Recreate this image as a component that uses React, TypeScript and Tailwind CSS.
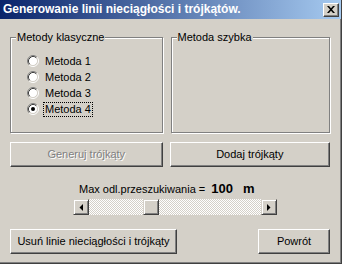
import React from "react";

const raised =
  "border border-t-white border-l-white border-r-[#404040] border-b-[#404040] shadow-[inset_-1px_-1px_0_#808080]";
const raisedSb =
  "border border-t-[#d4d0c8] border-l-[#d4d0c8] border-r-[#404040] border-b-[#404040] shadow-[inset_1px_1px_0_#fff,inset_-1px_-1px_0_#808080]";

function Radio({ checked }: { checked?: boolean }) {
  return (
    <svg width="12" height="12" viewBox="0 0 12 12" className="shrink-0">
      <circle cx="6" cy="6" r="4.5" fill="#fff" />
      <path d="M2.11 9.89 A5.5 5.5 0 0 1 9.89 2.11" fill="none" stroke="#808080" strokeWidth="1" />
      <path d="M9.89 2.11 A5.5 5.5 0 0 1 2.11 9.89" fill="none" stroke="#fff" strokeWidth="1" />
      <path d="M2.82 9.18 A4.5 4.5 0 0 1 9.18 2.82" fill="none" stroke="#404040" strokeWidth="1" />
      <path d="M9.18 2.82 A4.5 4.5 0 0 1 2.82 9.18" fill="none" stroke="#d4d0c8" strokeWidth="1" />
      {checked && <circle cx="6" cy="6" r="2" fill="#000" />}
    </svg>
  );
}

function Group({ label, className, children }: { label: string; className: string; children?: React.ReactNode }) {
  return (
    <div className={"relative border border-[#808080] shadow-[inset_1px_1px_0_#fff,1px_1px_0_#fff] " + className}>
      <span className="absolute left-[5px] top-[-7px] bg-[#d4d0c8] px-[1px] text-[11px] leading-[13px] text-black">
        {label}
      </span>
      {children}
    </div>
  );
}

export default function App() {
  const radios = ["Metoda 1", "Metoda 2", "Metoda 3", "Metoda 4"];
  return (
    <div className="w-[342px] h-[264px] overflow-hidden bg-[#d4d0c8] flex flex-col border-r border-b border-r-[#404040] border-b-[#404040] shadow-[inset_-1px_-1px_0_#808080] font-['Liberation_Sans',Arial,sans-serif] text-[11px] text-black select-none">
      {/* title bar */}
      <div className="h-[19px] flex items-center justify-between bg-[linear-gradient(to_right,#0a246a,#a6caf0)]">
        <span className="pl-[3px] text-white font-bold text-[12px] leading-[19px] whitespace-nowrap">
          Generowanie linii nieciągłości i trójkątów.
        </span>
        <div className={"w-[16px] h-[14px] mr-[2px] bg-[#d4d0c8] flex items-center justify-center " + raised}>
          <svg width="8" height="7" viewBox="0 0 8 7">
            <path d="M0 0 L2 0 L4 2.3 L6 0 L8 0 L5 3.5 L8 7 L6 7 L4 4.7 L2 7 L0 7 L3 3.5 Z" fill="#000" />
          </svg>
        </div>
      </div>

      <div className="pl-[10px] pr-[11px] flex flex-col">
        {/* groups */}
        <div className="mt-[18px] flex gap-[8px]">
          <Group label="Metody klasyczne" className="w-[153px] h-[96px]">
            <div className="flex flex-col pl-[16px] pt-[17px] gap-[4px]">
              {radios.map((r, i) => (
                <div key={r} className="flex items-center h-[12px] gap-[5px]">
                  <Radio checked={i === 3} />
                  <span
                    className={
                      "leading-[13px] px-[1px] " +
                      (i === 3 ? "outline outline-1 outline-dotted outline-black" : "")
                    }
                  >
                    {r}
                  </span>
                </div>
              ))}
            </div>
          </Group>
          <Group label="Metoda szybka" className="w-[160px] h-[96px]" />
        </div>

        {/* buttons row */}
        <div className="mt-[9px] flex gap-[7px]">
          <div className={"w-[153px] h-[25px] flex items-center justify-center text-[#808080] [text-shadow:1px_1px_0_#fff] " + raised}>
            Generuj trójkąty
          </div>
          <div className={"w-[161px] h-[25px] flex items-center justify-center " + raised}>
            Dodaj trójkąty
          </div>
        </div>

        {/* label */}
        <div className="mt-[14px] h-[15px] flex items-baseline pl-[69px] leading-[15px] whitespace-nowrap">
          <span className="text-[11px]">Max odl.przeszukiwania =</span>
          <span className="ml-[6px] text-[13px] font-bold">100</span>
          <span className="ml-[10px] text-[13px] font-bold">m</span>
        </div>

        {/* scrollbar */}
        <div className="mt-[3px] ml-[63px] w-[204px] h-[16px] flex bg-[repeating-conic-gradient(#fff_0_25%,#d4d0c8_0_50%)] bg-[length:2px_2px]">
          <div className={"w-[16px] h-[16px] bg-[#d4d0c8] flex items-center justify-center " + raisedSb}>
            <svg width="4" height="7" viewBox="0 0 4 7">
              <path d="M4 0 L4 7 L0.5 3.5 Z" fill="#000" />
            </svg>
          </div>
          <div className="w-[54px]" />
          <div className={"w-[16px] h-[16px] bg-[#d4d0c8] " + raisedSb} />
          <div className="flex-1" />
          <div className={"w-[16px] h-[16px] bg-[#d4d0c8] flex items-center justify-center " + raisedSb}>
            <svg width="4" height="7" viewBox="0 0 4 7">
              <path d="M0 0 L0 7 L3.5 3.5 Z" fill="#000" />
            </svg>
          </div>
        </div>

        {/* bottom buttons */}
        <div className="mt-[14px] flex justify-between">
          <div className={"w-[167px] h-[25px] flex items-center justify-center whitespace-nowrap " + raised}>
            Usuń linie nieciągłości i trójkąty
          </div>
          <div className={"w-[72px] h-[25px] flex items-center justify-center " + raised}>
            Powrót
          </div>
        </div>
      </div>
    </div>
  );
}
